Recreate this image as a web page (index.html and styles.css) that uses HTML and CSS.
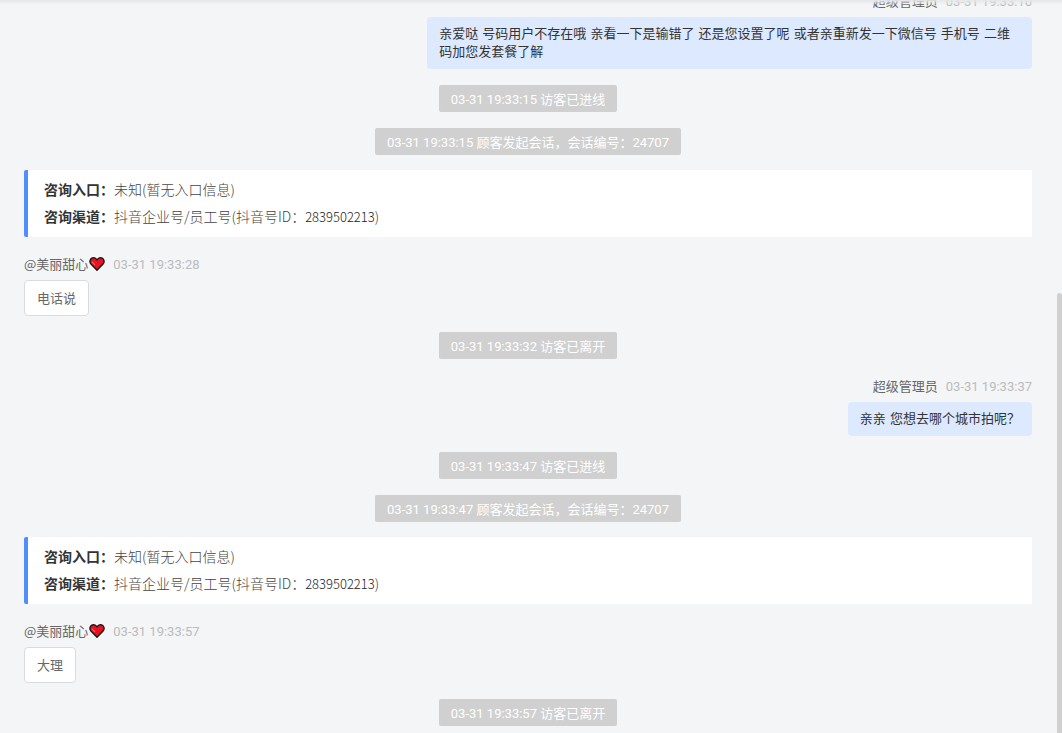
FILE: index.html
```html
<!DOCTYPE html>
<html lang="zh-CN">
<head>
  <meta charset="utf-8">
  <title>会话记录</title>
  <link rel="stylesheet" href="styles.css">
</head>
<body>
  <svg class="sprite" aria-hidden="true">
    <symbol id="heart" viewBox="0 0 16 16">
      <path d="M8 14.2 L1.7 7.7 C0.3 5.9 0.8 3.1 2.8 2.1 C4.7 1.2 6.8 1.9 8 3.8 C9.2 1.9 11.3 1.2 13.2 2.1 C15.2 3.1 15.7 5.9 14.3 7.7 Z" fill="#e81224" stroke="#111" stroke-width="1.3" stroke-linejoin="round"/>
      <path d="M3.2 6.2 L5.6 8.6" fill="none" stroke="#f4665c" stroke-width="1.2" stroke-linecap="round"/>
    </symbol>
  </svg>

  <main class="chat">
    <div class="message mine">
      <div class="meta"><span class="name">超级管理员</span><time>03-31 19:33:10</time></div>
      <p class="bubble">亲爱哒 号码用户不存在哦 亲看一下是输错了 还是您设置了呢 或者亲重新发一下微信号 手机号 二维码加您发套餐了解</p>
    </div>

    <p class="notice">03-31 19:33:15 访客已进线</p>
    <p class="notice">03-31 19:33:15 顾客发起会话，会话编号：24707</p>

    <dl class="source">
      <div><dt>咨询入口：</dt><dd>未知(暂无入口信息)</dd></div>
      <div><dt>咨询渠道：</dt><dd>抖音企业号/员工号(抖音号ID：<span class="number">2839502213</span>)</dd></div>
    </dl>

    <div class="message">
      <div class="meta"><span class="name">@美丽甜心<svg class="heart"><use href="#heart"/></svg></span><time>03-31 19:33:28</time></div>
      <p class="bubble">电话说</p>
    </div>

    <p class="notice">03-31 19:33:32 访客已离开</p>

    <div class="message mine">
      <div class="meta"><span class="name">超级管理员</span><time>03-31 19:33:37</time></div>
      <p class="bubble">亲亲 您想去哪个城市拍呢？</p>
    </div>

    <p class="notice">03-31 19:33:47 访客已进线</p>
    <p class="notice">03-31 19:33:47 顾客发起会话，会话编号：24707</p>

    <dl class="source">
      <div><dt>咨询入口：</dt><dd>未知(暂无入口信息)</dd></div>
      <div><dt>咨询渠道：</dt><dd>抖音企业号/员工号(抖音号ID：<span class="number">2839502213</span>)</dd></div>
    </dl>

    <div class="message">
      <div class="meta"><span class="name">@美丽甜心<svg class="heart"><use href="#heart"/></svg></span><time>03-31 19:33:57</time></div>
      <p class="bubble">大理</p>
    </div>

    <p class="notice">03-31 19:33:57 访客已离开</p>
  </main>
  <div class="scroll-thumb"></div>
</body>
</html>
```

FILE: styles.css
```css
* {
  box-sizing: border-box;
}
html, body {
  height: 100%;
  margin: 0;
}
body {
  position: relative;
  overflow: hidden;
  background: #f3f5f7;
  color: #666;
  font-family: "Noto Sans CJK SC", sans-serif;
  font-size: 13px;
}
/* shadow of the bar above the list */
body::before {
  content: "";
  position: absolute;
  top: 0;
  left: 0;
  right: 0;
  height: 5px;
  background: linear-gradient(#e6e7e9, rgba(243, 245, 247, 0));
}
p, dl, dd {
  margin: 0;
}
.sprite {
  position: absolute;
  width: 0;
  height: 0;
}
.chat {
  display: flex;
  flex-direction: column;
  justify-content: flex-end;
  height: 100%;
  padding: 0 30px 7px 24px;
}
.chat > * {
  flex-shrink: 0;
  margin-top: 16px;
}
.message {
  display: flex;
  flex-direction: column;
  align-items: flex-start;
  gap: 6px;
}
.mine {
  align-items: flex-end;
}
.meta {
  display: flex;
  gap: 8px;
  line-height: 21px;
}
.meta time {
  padding-top: 2px;
  color: #bbb;
  font-family: Roboto, "Noto Sans CJK SC", sans-serif;
  line-height: 19px;
}
.name {
  display: flex;
  align-items: center;
}
.heart {
  width: 16px;
  height: 16px;
  margin-left: 1px;
}
.bubble {
  max-width: 60%;
  padding: 8px 12px;
  border: 1px solid #d9dbde;
  border-radius: 4px;
  background: #fff;
  line-height: 18px;
}
.mine .bubble {
  border: none;
  background: #dce9ff;
  color: #333;
  font-family: "DejaVu Sans", "Noto Sans CJK SC", sans-serif;
}
.chat .notice {
  align-self: center;
  padding: 2px 12px 0;
  border-radius: 2px;
  background: #d0d0d0;
  color: #fff;
  font-family: Roboto, "Noto Sans CJK SC", sans-serif;
  line-height: 25px;
}
.chat .source {
  margin-top: 15px;
  padding: 6px 16px 7px;
  border-left: 4px solid #508ffb;
  border-radius: 2px 0 0 2px;
  background: #fff;
  font-size: 14px;
  line-height: 27px;
}
.source div {
  display: flex;
}
.source dt {
  color: #333;
  font-weight: bold;
}
.source dd {
  color: #444;
  font-weight: 300;
}
.number {
  color: #222;
  font-size: 13px;
}
.scroll-thumb {
  position: absolute;
  top: 40%;
  right: 0;
  bottom: 0;
  width: 5px;
  border-radius: 3px 3px 0 0;
  background: #d0d0d0;
}
```
